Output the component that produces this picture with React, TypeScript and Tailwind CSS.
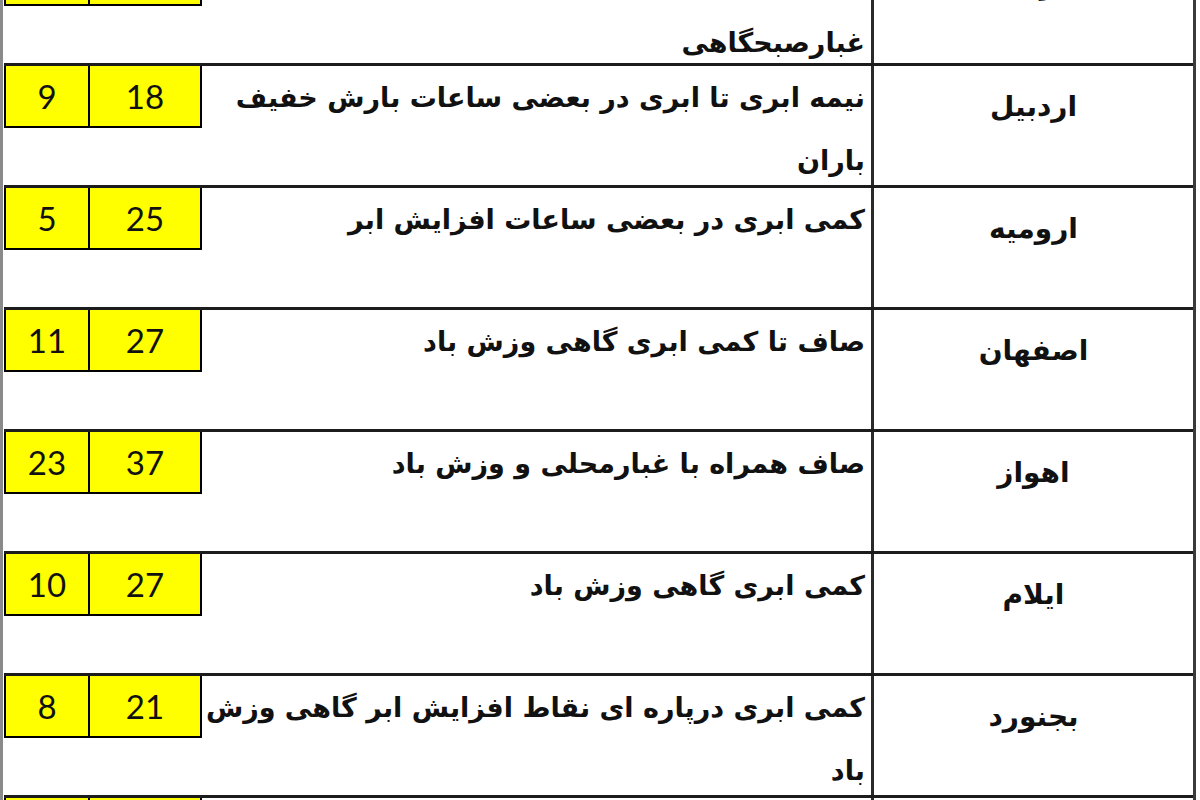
const rows = [
  { city: "اراک", lines: ["صاف تا کمی ابری همراه با وزش باد و", "غبارصبحگاهی"], max: "26", min: "7" },
  { city: "اردبیل", lines: ["نیمه ابری تا ابری در بعضی ساعات بارش خفیف", "باران"], max: "18", min: "9" },
  { city: "ارومیه", lines: ["کمی ابری در بعضی ساعات افزایش ابر"], max: "25", min: "5" },
  { city: "اصفهان", lines: ["صاف تا کمی ابری گاهی وزش باد"], max: "27", min: "11" },
  { city: "اهواز", lines: ["صاف همراه با غبارمحلی و وزش باد"], max: "37", min: "23" },
  { city: "ایلام", lines: ["کمی ابری گاهی وزش باد"], max: "27", min: "10" },
  { city: "بجنورد", lines: ["کمی ابری درپاره ای نقاط افزایش ابر گاهی وزش", "باد"], max: "21", min: "8" },
  { city: "بندرعباس", lines: ["صاف تا کمی ابری"], max: "35", min: "24" },
];

const fa = { fontFamily: '"DejaVu Sans", sans-serif' };
const num = { fontFamily: 'Lato, "Liberation Sans", sans-serif' };

export default function App() {
  return (
    <div className="h-[800px] w-[1200px] overflow-hidden bg-white text-[#111]">
      <div className="-mt-[56px] w-[1196px] border-l-[3px] border-r-[3px] border-l-[#8a8a8a] border-r-[#3a3a3a] pl-px">
        {rows.map((r, i) => (
          <div key={r.city} className="flex h-[122px] border-b-[3px] border-[#1c1c1c]">
            <div
              className="flex h-[62px] w-[198px] shrink-0 border-x-2 border-b-2 border-black bg-[#ffff00] text-[33px] leading-none"
              style={num}
            >
              <div className="flex w-[84px] items-center justify-center border-r-2 border-black">{r.min}</div>
              <div className="flex flex-1 items-center justify-center">{r.max}</div>
            </div>
            <div
              dir="rtl"
              className={`w-[669px] shrink-0 pr-[6px] text-[27px] font-bold leading-[63px] ${i === 0 ? "pt-[4px]" : ""}`}
              style={fa}
            >
              {r.lines.map((l) => (
                <div key={l} className="whitespace-nowrap">{l}</div>
              ))}
            </div>
            <div
              dir="rtl"
              className="flex-1 border-l-[3px] border-[#2a2a2a] pt-[11px] text-center text-[28px] font-bold leading-[60px]"
              style={fa}
            >
              {r.city}
            </div>
          </div>
        ))}
      </div>
    </div>
  );
}
